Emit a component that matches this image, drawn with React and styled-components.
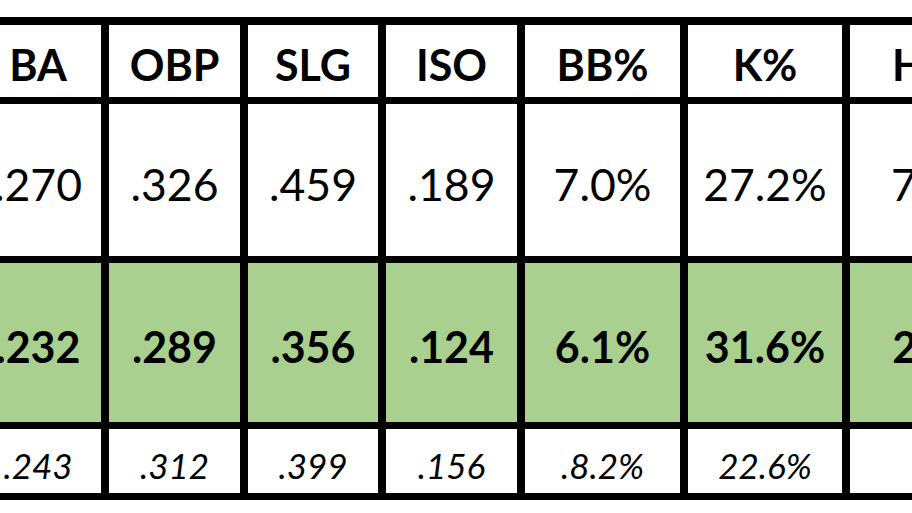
import React from "react";
import styled, { createGlobalStyle, css } from "styled-components";

const Global = createGlobalStyle`
  html, body {
    margin: 0;
    padding: 0;
    background: #ffffff;
    overflow: hidden;
  }
  body {
    font-family: Lato, "Open Sans", Arial, sans-serif;
    color: #000;
  }
`;

const Page = styled.div`
  width: 912px;
  height: 513px;
  overflow: hidden;
  background: #fff;
`;

const Table = styled.div`
  display: grid;
  grid-template-columns: 126px 131px 130px 131px 155px 154px 180px;
  grid-template-rows: 72px 152px 159px 64px;
  gap: 7px 8px;
  background: #000;
  padding: 8px 8px 7px 8px;
  margin: 17px 0 0 -33px;
  width: max-content;
`;

const Row = styled.div`
  display: contents;
`;

const variants = {
  header: css`
    background: #fff;
    font-weight: 700;
    font-size: 43px;
  `,
  actual: css`
    background: #fff;
    font-weight: 400;
    font-size: 44.5px;
  `,
  highlight: css`
    background: #a9d08e;
    font-weight: 700;
    font-size: 43px;
  `,
  projected: css`
    background: #fff;
    font-weight: 400;
    font-style: italic;
    font-size: 35px;
  `,
};

const Cell = styled.div`
  display: flex;
  align-items: center;
  justify-content: center;
  padding-top: 7px;
  box-sizing: border-box;
  white-space: nowrap;
  line-height: normal;
  color: #000;
  ${(p) => variants[p.$kind]}
`;

const rows = [
  { kind: "header", cells: ["BA", "OBP", "SLG", "ISO", "BB%", "K%", "HR%"] },
  { kind: "actual", cells: [".270", ".326", ".459", ".189", "7.0%", "27.2%", "7.9%"] },
  { kind: "highlight", cells: [".232", ".289", ".356", ".124", "6.1%", "31.6%", "2.9%"] },
  { kind: "projected", cells: [".243", ".312", ".399", ".156", ".8.2%", "22.6%", ""] },
];

export default function App() {
  return (
    <Page>
      <Global />
      <Table>
        {rows.map((r, i) => (
          <Row key={i}>
            {r.cells.map((c, j) => (
              <Cell key={j} $kind={r.kind}>
                {c}
              </Cell>
            ))}
          </Row>
        ))}
      </Table>
    </Page>
  );
}
